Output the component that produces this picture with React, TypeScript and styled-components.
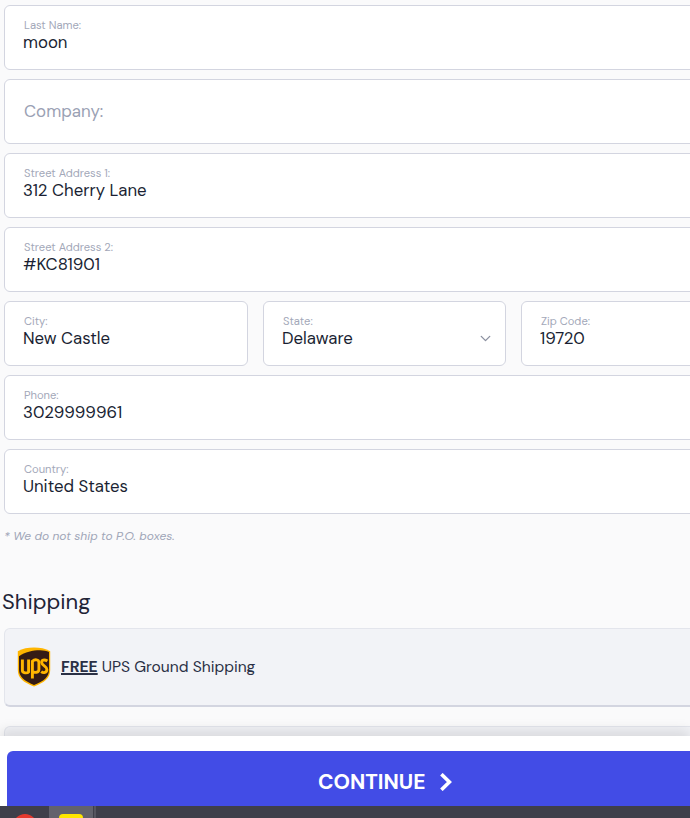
import styled, { createGlobalStyle } from "styled-components";
import { ChevronDown } from "lucide-react";

const fields = {
  lastName: { label: "Last Name:", value: "moon" },
  street1: { label: "Street Address 1:", value: "312 Cherry Lane" },
  street2: { label: "Street Address 2:", value: "#KC81901" },
  city: { label: "City:", value: "New Castle" },
  state: { label: "State:", value: "Delaware" },
  zip: { label: "Zip Code:", value: "19720" },
  phone: { label: "Phone:", value: "3029999961" },
  country: { label: "Country:", value: "United States" },
};

const TextField = ({ label, value, select }: { label: string; value: string; select?: boolean }) => (
  <FieldBox>
    <FieldLabel>{label}</FieldLabel>
    <FieldValue>{value}</FieldValue>
    {select && (
      <SelectArrow>
        <ChevronDown size={17} strokeWidth={1.9} />
      </SelectArrow>
    )}
  </FieldBox>
);

const UpsLogo = () => (
  <svg width="34" height="40" viewBox="0 0 34 40">
    <path
      d="M17 0.5C11 0.5 5.5 1.5 0.8 4.2V23C0.8 31 6.5 35.5 17 39.5C27.5 35.5 33.2 31 33.2 23V4.2C28.5 1.5 23 0.5 17 0.5Z"
      fill="#ffb500"
    />
    <path
      d="M2 22.6V9.2C8 5 15.5 3.2 23 3.2C26.6 3.4 29.6 3.8 32 4.9V23C32 30.2 26.8 34 17 38C7.2 34 2 30 2 22.6Z"
      fill="#351c15"
    />
    <g fill="none" stroke="#ffb500" strokeWidth="2.9">
      <path d="M5.4 12.5V23.5C5.4 26.4 10.4 26.4 11.6 24.8V12.5" />
      <path d="M15.4 31.5V14.2C17.6 12.2 21.9 12.2 21.9 15.5V22.4C21.9 25.8 17.6 26 15.4 24.4" />
      <path d="M30.4 14C27.2 12 24.4 13 24.7 15.6C25 18.6 29.9 19.2 29.9 22.4C29.9 25.8 26.4 26.4 24.2 24.6" />
    </g>
  </svg>
);

export default function App() {
  return (
    <>
      <GlobalStyle />
      <Page>
        <Content>
          <TextField {...fields.lastName} />
          <FieldBox $empty>
            <Placeholder>Company:</Placeholder>
          </FieldBox>
          <TextField {...fields.street1} />
          <TextField {...fields.street2} />
          <ThreeColumns>
            <TextField {...fields.city} />
            <TextField {...fields.state} select />
            <TextField {...fields.zip} />
          </ThreeColumns>
          <TextField {...fields.phone} />
          <TextField {...fields.country} />
          <Note>* We do not ship to P.O. boxes.</Note>
          <SectionTitle>Shipping</SectionTitle>
          <ShippingOption>
            <UpsLogo />
            <ShippingText>
              <Free>FREE</Free> UPS Ground Shipping
            </ShippingText>
          </ShippingOption>
          <ShippingOption />
        </Content>
        <ButtonBar>
          <ContinueButton>
            CONTINUE
            <svg width="14" height="18" viewBox="0 0 14 18">
              <path d="M2.4 1.2L10.4 9L2.4 16.8" fill="none" stroke="#fff" strokeWidth="3.6" />
            </svg>
          </ContinueButton>
        </ButtonBar>
        <Taskbar>
          <TaskIcon>
            <RedDot />
          </TaskIcon>
          <ActiveTaskIcon>
            <YellowTile />
          </ActiveTaskIcon>
          <TaskDivider />
        </Taskbar>
      </Page>
    </>
  );
}

const GlobalStyle = createGlobalStyle`
  html, body {
    margin: 0;
    padding: 0;
    height: 100%;
    overflow: hidden;
    background: #fafafb;
  }
`;

const Page = styled.div`
  width: 690px;
  height: 818px;
  display: flex;
  flex-direction: column;
  overflow: hidden;
  font-family: "DM Sans", Inter, "Liberation Sans", sans-serif;
  color: #1f2437;
`;

const Content = styled.div`
  height: 736px;
  flex: none;
  width: 761px;
  box-sizing: border-box;
  padding: 5px 0 0 4px;
  display: flex;
  flex-direction: column;
  gap: 9px;
  overflow: hidden;
  background: #fafafb;
`;

const FieldBox = styled.div<{ $empty?: boolean }>`
  position: relative;
  flex: none;
  height: 65px;
  box-sizing: border-box;
  background: #fff;
  border: 1px solid #d3d5e0;
  border-radius: 6px;
  padding: 13px 18px 0;
  display: flex;
  flex-direction: column;
  justify-content: ${({ $empty }) => ($empty ? "center" : "flex-start")};
  padding-top: ${({ $empty }) => ($empty ? "0" : "13px")};
`;

const FieldLabel = styled.div`
  font-size: 11.2px;
  line-height: 13px;
  color: #a3a8b9;
  padding-left: 1px;
`;

const FieldValue = styled.div`
  font-size: 16.8px;
  line-height: 20px;
  color: #1a1f33;
`;

const Placeholder = styled.div`
  font-size: 16.9px;
  line-height: 20px;
  margin-top: -2px;
  color: #9aa1b4;
  padding-left: 1px;
`;

const SelectArrow = styled.span`
  position: absolute;
  right: 11px;
  top: 28px;
  color: #8b90a0;
  display: flex;
`;

const ThreeColumns = styled.div`
  display: grid;
  grid-template-columns: 244px 243px 1fr;
  gap: 15px;
`;

const Note = styled.div`
  margin-top: 6px;
  font-size: 12px;
  line-height: 15px;
  font-style: italic;
  color: #a0a6b8;
`;

const SectionTitle = styled.h2`
  margin: 35px 0 0 -2px;
  font-size: 22px;
  line-height: 28px;
  font-weight: 400;
  color: #1f2437;
`;

const ShippingOption = styled.div`
  flex: none;
  margin-top: 3px;
  height: 79px;
  box-sizing: border-box;
  background: #f2f3f7;
  border: 1px solid #e3e5ec;
  border-bottom: 2px solid #d3d5e0;
  border-radius: 6px;
  padding-left: 12px;
  display: flex;
  align-items: center;
  gap: 10px;

  & + & {
    margin-top: 10px;
  }
`;

const ShippingText = styled.div`
  font-size: 15.6px;
  color: #2a3045;
`;

const Free = styled.span`
  font-weight: 700;
  text-decoration: underline;
  text-decoration-thickness: 1.5px;
`;

const ButtonBar = styled.div`
  position: relative;
  flex: none;
  height: 70px;
  box-sizing: border-box;
  padding: 15px 0 0 7px;
  background: #fff;
  box-shadow: 0 -6px 12px rgba(0, 0, 0, 0.1);
`;

const ContinueButton = styled.button`
  width: 730px;
  height: 55px;
  border: 0;
  border-radius: 6px 6px 0 0;
  background: #424ce6;
  color: #fff;
  font-family: inherit;
  font-size: 21px;
  font-weight: 700;
  display: flex;
  align-items: center;
  justify-content: flex-start;
  gap: 14px;
  padding: 6px 0 0 311px;
`;

const Taskbar = styled.div`
  position: relative;
  flex: none;
  height: 12px;
  background: #3f3f4a;
  display: flex;
  overflow: hidden;
`;

const TaskIcon = styled.div`
  width: 49px;
  display: flex;
  justify-content: center;
  padding-top: 8px;
`;

const ActiveTaskIcon = styled(TaskIcon)`
  width: 44px;
  background: #62626c;
`;

const RedDot = styled.div`
  width: 24px;
  height: 24px;
  border-radius: 50%;
  background: #e5392f;
`;

const YellowTile = styled.div`
  width: 24px;
  height: 20px;
  border-radius: 4px;
  background: #ffe600;
`;

const TaskDivider = styled.div`
  width: 2px;
  margin-left: 1px;
  background: #55555f;
`;
